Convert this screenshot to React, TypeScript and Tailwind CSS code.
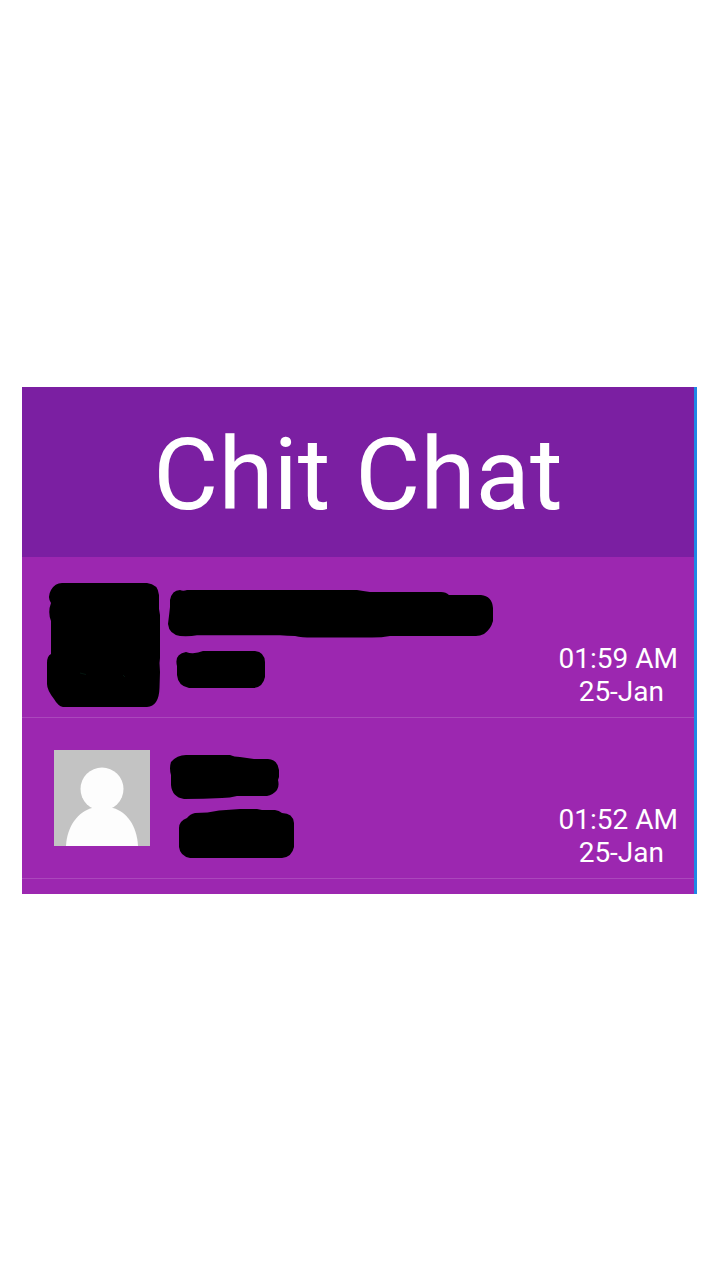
type Scribble = { viewBox: string; path: string; label: string };

type Chat = {
  id: number;
  time: string;
  date: string;
  avatar?: string;
  name: Scribble;
  message: Scribble;
};

const chats: Chat[] = [
  {
    id: 1,
    time: "01:59 AM",
    date: "25-Jan",
    avatar:
      "M62 583H147Q158 584 159 595V609L160 615V658L159.500 663L160 672L159.500 688Q159 706 147 707H63Q58 706 54 699Q47 690 47 684V663Q47 656 51 654V621Q47.500 612 51 603Q47 597 51 590Q55 583 62 583Z",
    name: {
      label: "Hidden name",
      viewBox: "166 589 340 52",
      path: "M180 590Q183 591.500 187 590H357Q363 591 370 592H441Q446 592 449 595H481Q492 596 493 608V621Q491 629 484 634Q480 636 476 636H390Q382 637.500 372 637.500H312Q302 637.500 295 636Q287 636 280 635.300H197Q190 636.500 180 636Q169 634 168 624Q169 616 170 607V600Q172 590 180 590Z",
    },
    message: {
      label: "Hidden message",
      viewBox: "166 645 340 56",
      path: "M186 652Q190 653.500 193 653.300Q198 653 203 651H255Q264.500 652 265 662V677Q263 687 254 688H189Q178 686 177 675V666Q174 654 186 652Z",
    },
  },
  {
    id: 2,
    time: "01:52 AM",
    date: "25-Jan",
    name: {
      label: "Hidden name",
      viewBox: "166 750 340 52",
      path: "M186 755H230Q234 757 240 757Q247 758 254 759H268Q278 760 279 770V777L278 780Q279.500 786 277 790Q273 795 267 796H237Q230 798 222 798Q204 799 184 799Q172 797 171 785V775Q169 768 171 762Q177 755 186 755Z",
    },
    message: {
      label: "Hidden message",
      viewBox: "166 806 340 56",
      path: "M195 813Q208 813 219 810.500Q230 809.500 240 809H257L262 810H275Q279 810.500 282 813Q293 813 294 823V847Q292 857 282 858H190Q180 856 179 847V828Q179 821 187 818Q190 814 195 813Z",
    },
  },
];

function Redacted({ scribble, className }: { scribble: Scribble; className: string }) {
  return (
    <svg
      role="img"
      aria-label={scribble.label}
      viewBox={scribble.viewBox}
      preserveAspectRatio="xMinYMin meet"
      className={className}
    >
      <path d={scribble.path} />
    </svg>
  );
}

function Avatar({ path }: { path?: string }) {
  if (path) {
    return (
      <svg
        role="img"
        aria-label="Hidden photo"
        viewBox="54 589 96 96"
        className="size-24 shrink-0 overflow-visible"
      >
        <path d={path} />
        <path d="M80 673L86 674.500M123 675L125 677" stroke="#04150f" fill="none" />
      </svg>
    );
  }
  return (
    <svg role="img" aria-label="Default photo" viewBox="0 0 96 96" className="size-24 shrink-0 bg-[#c3c3c3]">
      <circle cx="48" cy="39" r="21.500" fill="#fdfdfd" />
      <path d="M12 96C13 76 24 62 38 58H59C73 62 83 76 84 96Z" fill="#fdfdfd" />
    </svg>
  );
}

export default function App() {
  return (
    <main className="flex min-h-screen flex-col justify-center bg-white pt-px pr-[23px] pl-[22px] font-[Roboto,sans-serif] text-white">
      <section className="border-r-3 border-[#1e88e5] bg-[#9c27b0] pb-[15px]">
        <header className="bg-[#7b1fa2] pt-7 pb-[22px]">
          <h1 className="text-center text-[100px] leading-[120px]">Chit Chat</h1>
        </header>
        <ul>
          {chats.map((chat) => (
            <li key={chat.id} className="flex border-b border-[#ab47bc] pt-8 pr-4 pl-8">
              <Avatar path={chat.avatar} />
              <div className="ml-4 flex flex-1 flex-col gap-1 pb-4">
                <Redacted scribble={chat.name} className="h-[52px] w-[340px] overflow-visible" />
                <Redacted scribble={chat.message} className="h-14 w-[340px] overflow-visible" />
              </div>
              <div className="flex flex-col items-end self-end pb-[9px] text-[28px] leading-[33px]">
                <time>{chat.time}</time>
                <time className="pr-3.5">{chat.date}</time>
              </div>
            </li>
          ))}
        </ul>
      </section>
    </main>
  );
}
